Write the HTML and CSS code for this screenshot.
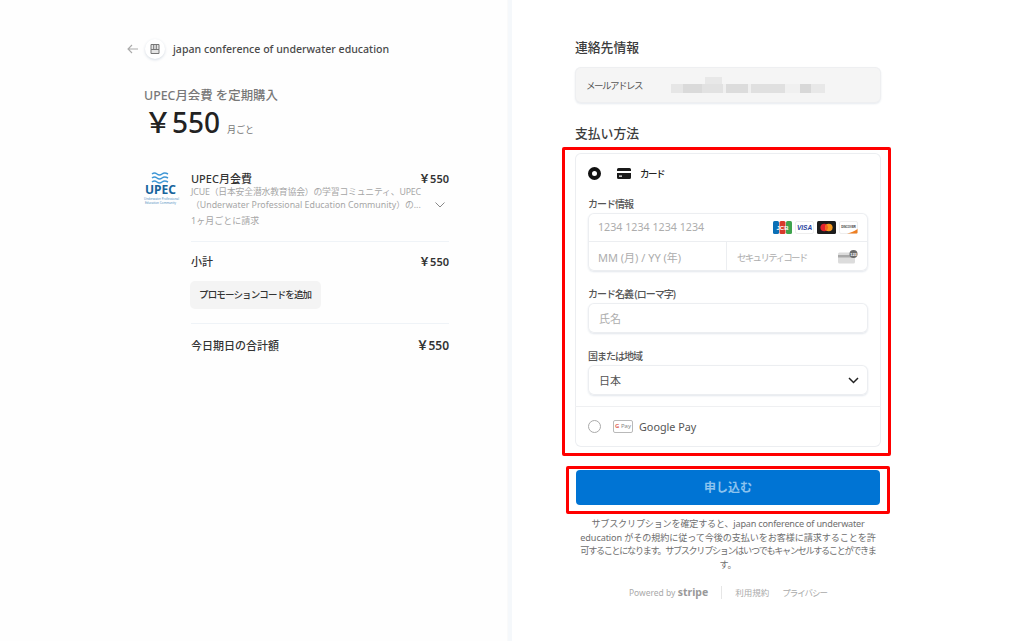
FILE: index.html
```html
<!DOCTYPE html>
<html lang="ja">
<head>
    <meta charset="UTF-8">
    <title>UPEC月会費</title>
    <link rel="stylesheet" href="styles.css">
</head>
<body>
    <div class="container">
        <div class="summary">
            <div class="merchant">
                <svg class="back" width="12" height="10" viewBox="0 0 12 10"><path d="M5 1 1 5l4 4M1 5h10" fill="none" stroke="#aaa" stroke-width="1.1"/></svg>
                <div class="merchant-icon">
                    <svg width="12" height="12" viewBox="0 0 12 12"><path d="M2 1.5h8v5H2zM2 6.500h8v4H2zM4.700 1.500v5M7.300 1.500v5" fill="#e4e4e4" stroke="#777" stroke-width="1"/></svg>
                </div>
                <span class="merchant-name">japan conference of underwater education</span>
            </div>

            <div class="plan-title">UPEC月会費 を定期購入</div>
            <div class="plan-price"><span class="plan-amount">￥550</span><span class="plan-period">月ごと</span></div>

            <div class="item">
                <div class="logo">
                    <svg width="33" height="12" viewBox="0 0 33 12">
                        <path d="M8 2q2.500-2 5 0t5 0q2.500-2 6 0M8 6q2.500-2 5 0t5 0q2.500-2 6 0M8 10q2.500-2 5 0t5 0q2.500-2 6 0" fill="none" stroke="#3f97d6" stroke-width="1.500"/>
                    </svg>
                    <div class="logo-name">UPEC</div>
                    <div class="logo-sub">Underwater Professional<br>Education Community</div>
                </div>
                <div class="item-body">
                    <div class="row item-title"><span>UPEC月会費</span><span class="strong">￥550</span></div>
                    <div class="item-desc-row">
                        <div class="item-desc">
                            <div class="item-desc-first">JCUE（日本安全潜水教育協会）の学習コミュニティ、UPEC</div>
                            <div>（Underwater Professional Education Community）の...</div>
                        </div>
                        <svg class="item-chevron" width="10" height="6" viewBox="0 0 10 6"><path d="M.5.500 5 5 9.500.500" fill="none" stroke="#888" stroke-width="1"/></svg>
                    </div>
                    <div class="item-cycle">1ヶ月ごとに請求</div>
                </div>
            </div>

            <div class="totals">
                <div class="row subtotal"><span>小計</span><span class="strong">￥550</span></div>
                <div class="promo">プロモーションコードを追加</div>
                <div class="row total"><span>今日期日の合計額</span><span class="total-amount">￥550</span></div>
            </div>
        </div>

        <div class="checkout">
            <div class="form">
                <h2 class="section-title">連絡先情報</h2>
                <div class="email-box">
                    <span class="email-label">メールアドレス</span>
                    <div class="email-blur"></div>
                </div>

                <h2 class="section-title method-title">支払い方法</h2>
                <div class="marked">
                    <div class="mark mark-card"></div>
                    <div class="pay-card">
                        <div class="pay-card-main">
                            <div class="pay-option">
                                <span class="radio-on"></span>
                                <svg class="card-glyph" width="14" height="11" viewBox="0 0 14 11"><path fill-rule="evenodd" d="M1.500 0h11A1.500 1.500 0 0 1 14 1.500v8a1.500 1.500 0 0 1-1.500 1.500h-11A1.500 1.500 0 0 1 0 9.500v-8A1.500 1.500 0 0 1 1.500 0zM0 3v2h14V3zM2 7.500v1.200h3V7.500z" fill="#1a1a1a"/></svg>
                                <span class="pay-option-name">カード</span>
                            </div>

                            <div class="field-label">カード情報</div>
                            <div class="input-group">
                                <div class="input-row">
                                    <span class="placeholder card-number">1234 1234 1234 1234</span>
                                    <div class="brands">
                                        <svg width="19" height="13" viewBox="0 0 19 13">
                                            <rect width="6" height="13" rx="1.500" fill="#0b6fb5"/>
                                            <rect x="6.500" width="6" height="13" rx="1.500" fill="#d8392b"/>
                                            <rect x="13" width="6" height="13" rx="1.500" fill="#3fa34d"/>
                                            <text x="9.500" y="9" class="brand-jcb" text-anchor="middle">JCB</text>
                                        </svg>
                                        <svg width="19" height="13" viewBox="0 0 19 13">
                                            <rect x=".5" y=".5" width="18" height="12" rx="1.500" fill="#fff" stroke="#eee"/>
                                            <text x="9.500" y="9" class="brand-visa" text-anchor="middle">VISA</text>
                                        </svg>
                                        <svg width="19" height="13" viewBox="0 0 19 13">
                                            <rect width="19" height="13" rx="1.500" fill="#1c1c1c"/>
                                            <circle cx="7.200" cy="6.500" r="3.800" fill="#e3232c"/>
                                            <circle cx="11.800" cy="6.500" r="3.800" fill="#f59a1f"/>
                                            <path d="M9.500 3.500a3.800 3.800 0 0 1 0 6 3.800 3.800 0 0 1 0-6z" fill="#f2641f"/>
                                        </svg>
                                        <svg width="19" height="13" viewBox="0 0 19 13">
                                            <rect x=".5" y=".5" width="18" height="12" rx="1.500" fill="#fff" stroke="#eee"/>
                                            <path d="M8 12.500c4-.8 7.500-2.300 10.500-4.500v3.500a1 1 0 0 1-1 1z" fill="#ee7f22"/>
                                            <text x="9.500" y="7.300" class="brand-disc" text-anchor="middle">DISCOVER</text>
                                        </svg>
                                    </div>
                                </div>
                                <div class="input-split">
                                    <div class="input-cell expiry"><span class="placeholder">MM (月) / YY (年)</span></div>
                                    <div class="input-cell cvc">
                                        <span class="placeholder">セキュリティコード</span>
                                        <svg width="20" height="14" viewBox="0 0 20 14">
                                            <rect y="2.500" width="17" height="11" rx="1.500" fill="#dcdcdc"/>
                                            <rect y="5" width="17" height="2.500" fill="#a9a9a9"/>
                                            <circle cx="15.500" cy="4" r="4" fill="#6b6b6b"/>
                                            <text x="15.500" y="5.500" class="brand-cvc" text-anchor="middle">123</text>
                                        </svg>
                                    </div>
                                </div>
                            </div>

                            <div class="field-label">カード名義 (ローマ字)</div>
                            <div class="input-box"><span class="placeholder">氏名</span></div>

                            <div class="field-label">国または地域</div>
                            <div class="input-box select-box">
                                <span class="select-value">日本</span>
                                <svg width="11" height="7" viewBox="0 0 11 7"><path d="M1 1l4.500 4.500L10 1" fill="none" stroke="#222" stroke-width="1.500"/></svg>
                            </div>
                        </div>

                        <div class="pay-option gpay-option">
                            <span class="radio-off"></span>
                            <span class="gpay-badge"><span class="gpay-g">G</span> Pay</span>
                            <span class="gpay-name">Google Pay</span>
                        </div>
                    </div>
                </div>

                <div class="marked submit-wrap">
                    <div class="mark mark-submit"></div>
                    <div class="submit">申し込む</div>
                </div>

                <p class="terms"><span class="terms-first">サブスクリプションを確定すると、japan conference of underwater</span><br>education がその規約に従って今後の支払いをお客様に請求することを許<br><span class="terms-third">可することになります。サブスクリプションはいつでもキャンセルすることができま</span><br>す。</p>

                <div class="footer">
                    <span>Powered by <b class="stripe">stripe</b></span>
                    <span class="footer-sep"></span>
                    <span>利用規約</span>
                    <span class="footer-kana">プライバシー</span>
                </div>
            </div>
        </div>
    </div>
</body>
</html>
```

FILE: styles.css
```css
* {
    margin: 0;
    padding: 0;
    box-sizing: border-box;
}

body {
    font-family: "Noto Sans", "Noto Sans CJK JP", sans-serif;
    background: #fff;
    color: #333;
    overflow: hidden;
}

.container {
    display: flex;
    height: 641px;
}

.row {
    display: flex;
    justify-content: space-between;
    align-items: center;
}

.strong {
    font-weight: 600;
}

/* left side */
.summary {
    width: 508px;
    padding: 38px 59px 0 127px;
    background: #fefefe;
}

.merchant {
    display: flex;
    align-items: center;
    height: 22px;
}

.back {
    margin-right: 6px;
}

.merchant-icon {
    width: 20px;
    height: 20px;
    border-radius: 50%;
    background: #fff;
    box-shadow: 0 1px 3px rgba(50, 80, 120, 0.2);
    display: flex;
    align-items: center;
    justify-content: center;
    margin-right: 8px;
}

.merchant-name {
    font-size: 10.600px;
    font-weight: 500;
    color: #4a4a4a;
    white-space: nowrap;
}

.plan-title {
    margin: 27px 0 0 17px;
    font-size: 12.400px;
    line-height: 18px;
    font-weight: 500;
    color: #787878;
}

.plan-price {
    display: flex;
    align-items: baseline;
    margin: -2px 0 0 17px;
    height: 39px;
}

.plan-amount {
    font-size: 28px;
    line-height: 38px;
    font-weight: 500;
    color: #222;
}

.plan-period {
    font-size: 9px;
    color: #777;
    margin-left: 7px;
}

.item {
    display: flex;
    margin: 29px 0 0 17px;
}

.logo {
    width: 33px;
    margin: 1px 14px 0 0;
    text-align: center;
    flex-shrink: 0;
}

.logo svg {
    display: block;
}

.logo-name {
    font-size: 12px;
    line-height: 12px;
    font-weight: 700;
    color: #17649c;
}

.logo-sub {
    font-size: 3px;
    line-height: 4px;
    margin-top: 1px;
    color: #4f8fbe;
    white-space: nowrap;
}

.item-body {
    flex: 1;
    min-width: 0;
}

.item-title {
    font-size: 11px;
    line-height: 15px;
    font-weight: 500;
    color: #333;
}

.item-desc-row {
    display: flex;
    align-items: flex-end;
    justify-content: space-between;
}

.item-desc {
    font-size: 8.800px;
    line-height: 13px;
    color: #a6a6a6;
    white-space: nowrap;
}

.item-desc-first {
    letter-spacing: -0.150px;
}

.item-chevron {
    margin: 0 4px 4px 0;
}

.item-cycle {
    font-size: 9px;
    line-height: 14px;
    margin-top: 2px;
    color: #a6a6a6;
}

.totals {
    margin-left: 64px;
}

.subtotal {
    margin-top: 13px;
    padding-top: 12px;
    border-top: 1px solid #eff3f7;
    font-size: 11px;
    line-height: 16px;
    font-weight: 500;
}

.promo {
    display: block;
    width: 131px;
    margin: 11px 0 14px -1px;
    padding-left: 9px;
    height: 28px;
    line-height: 28px;
    border-radius: 5px;
    background: #f4f4f4;
    font-size: 9.500px;
    letter-spacing: -0.850px;
    font-weight: 500;
    color: #333;
    white-space: nowrap;
}

.total {
    padding-top: 13px;
    border-top: 1px solid #eff3f7;
    font-size: 11px;
    line-height: 18px;
    font-weight: 500;
}

.total-amount {
    font-size: 12px;
    font-weight: 600;
}

/* right side */
.checkout {
    flex: 1;
    padding-left: 63px;
    border-left: 4px solid #f5f8fb;
    box-shadow: -1px 0 0 #fafafa;
}

.form {
    width: 306px;
    padding-top: 38px;
}

.section-title {
    font-size: 12.800px;
    line-height: 18px;
    font-weight: 500;
    color: #3c3c3c;
}

.email-box {
    display: flex;
    align-items: center;
    height: 36px;
    margin-top: 11px;
    padding-left: 11px;
    background: #f5f5f5;
    border-radius: 6px;
    box-shadow: inset 0 0 0 1px #eeeff1, 0 1px 2px rgba(50, 80, 120, 0.12);
}

.email-label {
    width: 85px;
    font-size: 9.500px;
    letter-spacing: -1.500px;
    color: #555;
    white-space: nowrap;
}

.email-blur {
    width: 154px;
    height: 16px;
    background:
        linear-gradient(#e8e8e8, #e8e8e8) 34px 0 / 17px 7px no-repeat,
        linear-gradient(90deg, #e6e6e6 0 8%, #dadada 8% 20%, #e2e2e2 20% 34%, #f0f0f0 34% 36%, #dcdcdc 36% 50%, #f0f0f0 50% 52%, #e0e0e0 52% 74%, #f0f0f0 74% 84%, #d8d8d8 84% 91%, #e8e8e8 91% 100%) 0 100% / 100% 9px no-repeat;
}

.method-title {
    margin-top: 21px;
}

.marked {
    position: relative;
}

.mark {
    position: absolute;
    border: 3px solid #f00;
    border-radius: 2px;
    pointer-events: none;
    z-index: 1;
}

.mark-card {
    top: -6px;
    left: -13px;
    right: -10px;
    bottom: -9px;
}

.mark-submit {
    top: -4px;
    left: -9px;
    right: -9px;
    bottom: -9px;
}

.pay-card {
    margin-top: 11px;
    height: 294px;
    border-radius: 6px;
    box-shadow: inset 0 0 0 1px #eceef1;
    background: #fff;
}

.pay-card-main {
    padding: 12px 13px 0;
    height: 254px;
    border-bottom: 1px solid #eff0f2;
}

.pay-option {
    display: flex;
    align-items: center;
    height: 16px;
}

.radio-on,
.radio-off {
    width: 13px;
    height: 13px;
    border-radius: 50%;
    flex-shrink: 0;
}

.radio-on {
    background: #fff;
    border: 4px solid #111;
}

.radio-off {
    background: #fff;
    border: 1px solid #aaa;
}

.card-glyph {
    margin-left: 16px;
}

.pay-option-name {
    margin-left: 9px;
    font-size: 9.500px;
    letter-spacing: -1.500px;
    font-weight: 500;
    color: #222;
}

.field-label {
    margin-top: 15px;
    font-size: 10px;
    letter-spacing: -1px;
    line-height: 16px;
    font-weight: 500;
    color: #555;
}

.input-group,
.input-box {
    border-radius: 6px;
    background: #fff;
    box-shadow: inset 0 0 0 1px #eceef1, 0 1px 2px rgba(50, 80, 120, 0.14);
}

.input-group {
    margin-top: 1px;
}

.input-row {
    display: flex;
    align-items: center;
    justify-content: space-between;
    height: 29px;
    padding: 0 10px;
    border-bottom: 1px solid #eceef1;
}

.placeholder {
    font-size: 11px;
    color: #adadad;
}

.card-number {
    font-size: 10.700px;
}

.brands {
    display: flex;
    gap: 3px;
}

.brands svg,
.cvc svg {
    display: block;
}

.brand-jcb {
    font: 700 6px "Liberation Sans", sans-serif;
    fill: #fff;
}

.brand-visa {
    font: italic 700 6.500px "Liberation Sans", sans-serif;
    fill: #1f3f9e;
}

.brand-disc {
    font: 700 2.800px "Liberation Sans", sans-serif;
    fill: #333;
}

.brand-cvc {
    font: 700 4px "Liberation Sans", sans-serif;
    fill: #fff;
}

.input-split {
    display: flex;
    height: 29px;
}

.input-cell {
    display: flex;
    align-items: center;
    padding: 0 10px;
}

.expiry {
    width: 139px;
    border-right: 1px solid #eceef1;
}

.cvc {
    flex: 1;
    justify-content: space-between;
}

.cvc .placeholder {
    font-size: 9.500px;
    letter-spacing: -1.700px;
    white-space: nowrap;
}

.input-box {
    display: flex;
    align-items: center;
    height: 30px;
    padding: 0 11px;
    margin-top: 1px;
}

.select-box {
    justify-content: space-between;
    padding-right: 9px;
}

.select-value {
    font-size: 11px;
    color: #555;
}

.gpay-option {
    height: 39px;
    padding-left: 13px;
}

.gpay-badge {
    margin-left: 12px;
    width: 20px;
    height: 13px;
    border: 1px solid #b9b9b9;
    border-radius: 2px;
    font-size: 6px;
    line-height: 11px;
    color: #888;
    text-align: center;
    white-space: nowrap;
}

.gpay-g {
    color: #e0685a;
    font-weight: 700;
}

.gpay-name {
    margin-left: 6px;
    font-size: 10.800px;
    color: #555;
}

.submit-wrap {
    margin-top: 23px;
    padding: 0 1px;
}

.submit {
    height: 35px;
    line-height: 35px;
    text-align: center;
    border-radius: 4px;
    background: #0074d4;
    color: #8dc3ee;
    font-size: 12px;
    font-weight: 700;
}

.terms {
    margin-top: 12px;
    font-size: 9.100px;
    line-height: 13.500px;
    letter-spacing: -0.100px;
    text-align: center;
    color: #6e6e6e;
    white-space: nowrap;
}

.terms-first {
    letter-spacing: -0.200px;
}

.terms-third {
    letter-spacing: -1.300px;
}

.footer {
    display: flex;
    align-items: center;
    justify-content: center;
    gap: 13px;
    margin-top: 14px;
    font-size: 8.500px;
    color: #aaa;
}

.stripe {
    font-size: 10.500px;
    font-weight: 700;
    color: #999;
}

.footer-kana {
    letter-spacing: -1px;
}

.footer-sep {
    width: 1px;
    height: 13px;
    background: #e6e6e6;
}
```
